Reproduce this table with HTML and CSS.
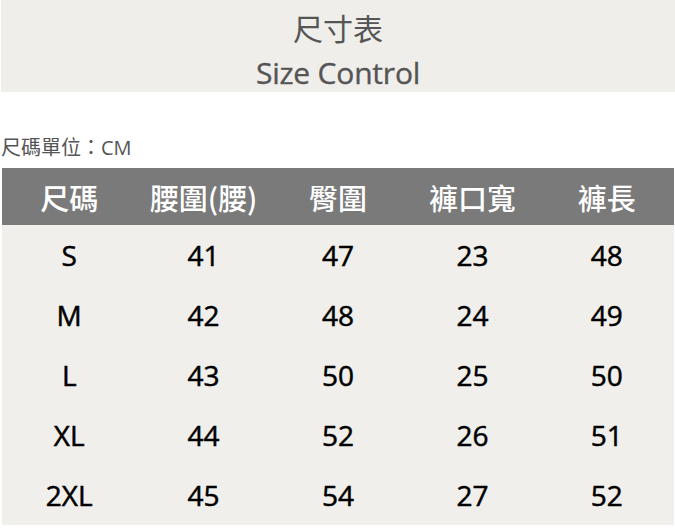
FILE: index.html
```html
<!DOCTYPE html>
<html lang="zh-Hant">
<head>
<meta charset="utf-8">
<link rel="stylesheet" href="styles.css">
</head>
<body>
<div class="page">
  <header class="banner">
    <div class="title-zh">尺寸表</div>
    <div class="title-en">Size Control</div>
  </header>
  <div class="unit">尺碼單位：CM</div>
  <div class="table">
    <div class="row head">
      <div class="cell">尺碼</div>
      <div class="cell">腰圍(腰)</div>
      <div class="cell">臀圍</div>
      <div class="cell">褲口寬</div>
      <div class="cell">褲長</div>
    </div>
    <div class="row"><div class="cell">S</div><div class="cell">41</div><div class="cell">47</div><div class="cell">23</div><div class="cell">48</div></div>
    <div class="row"><div class="cell">M</div><div class="cell">42</div><div class="cell">48</div><div class="cell">24</div><div class="cell">49</div></div>
    <div class="row"><div class="cell">L</div><div class="cell">43</div><div class="cell">50</div><div class="cell">25</div><div class="cell">50</div></div>
    <div class="row"><div class="cell">XL</div><div class="cell">44</div><div class="cell">52</div><div class="cell">26</div><div class="cell">51</div></div>
    <div class="row"><div class="cell">2XL</div><div class="cell">45</div><div class="cell">54</div><div class="cell">27</div><div class="cell">52</div></div>
  </div>
</div>
</body>
</html>
```
FILE: styles.css
```css
html, body {
  margin: 0;
  padding: 0;
  background: #ffffff;
}
body {
  font-family: "Open Sans", "Noto Sans CJK TC", sans-serif;
  width: 675px;
  height: 530px;
  overflow: hidden;
}
.page {
  display: flex;
  flex-direction: column;
}
.banner {
  height: 92px;
  margin-left: 1px;
  background: #efeeea;
  color: #555555;
  display: flex;
  flex-direction: column;
  align-items: center;
}
.title-zh {
  font-family: "Noto Sans CJK TC", sans-serif;
  font-size: 30px;
  line-height: 36px;
  margin-top: 9px;
}
.title-en {
  font-size: 30px;
  line-height: 36px;
  margin-top: 10px;
  letter-spacing: -0.2px;
  -webkit-text-stroke: 0.35px currentColor;
}
.unit {
  font-family: "Open Sans", "Noto Sans CJK TC", sans-serif;
  color: #555555;
  font-size: 20px;
  line-height: 24px;
  margin-top: 44px;
  margin-left: 1px;
}
.table {
  margin: 8px 1px 0 2px;
  display: flex;
  flex-direction: column;
  background: #f0efeb;
}
.row {
  display: grid;
  grid-template-columns: repeat(5, 1fr);
  height: 60px;
  align-items: center;
  color: #000000;
  font-size: 28px;
  -webkit-text-stroke: 0.5px currentColor;
}
.row.head {
  height: 57px;
  background: #7a7a7a;
  color: #ffffff;
  font-family: "Noto Sans CJK TC", sans-serif;
  font-size: 29px;
  font-weight: 500;
  -webkit-text-stroke: 0;
}
.cell {
  text-align: center;
}
```
